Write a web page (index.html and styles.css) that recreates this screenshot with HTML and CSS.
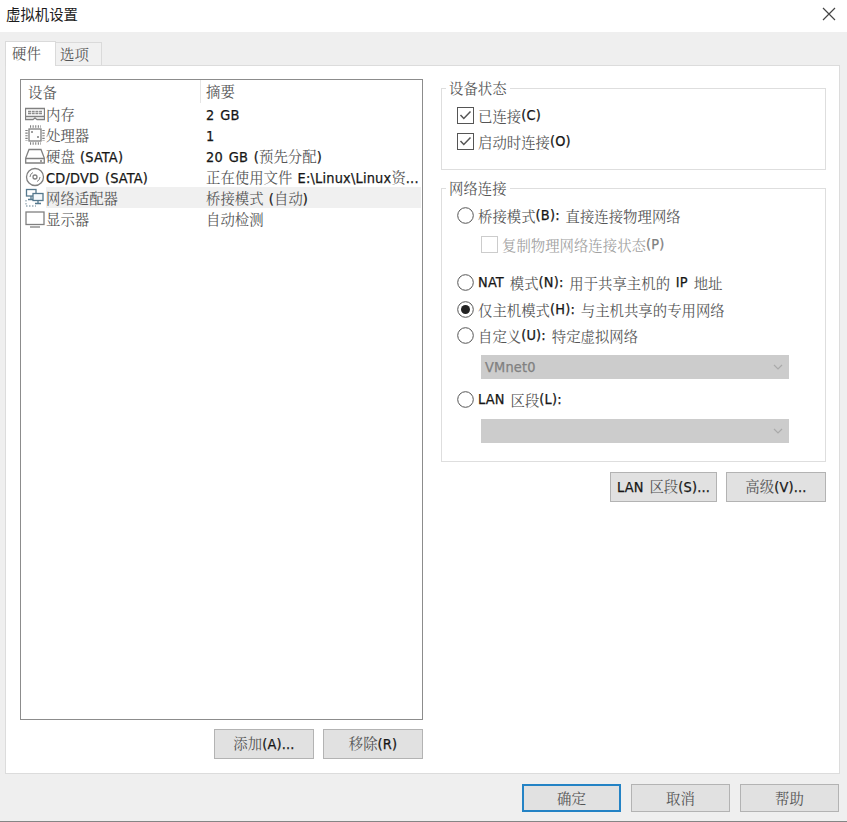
FILE: index.html
```html
<!DOCTYPE html>
<html lang="zh-CN">
<head>
<meta charset="utf-8">
<title>虚拟机设置</title>
<link rel="stylesheet" href="styles.css">
</head>
<body>
<div class="window">
  <header class="titlebar">
    <h1>虚拟机设置</h1>
    <svg class="close" width="14" height="14" viewBox="0 0 14 14"><path d="M1 1L13 13M13 1L1 13"/></svg>
  </header>
  <nav class="tabs">
    <div class="tab active">硬件</div>
    <div class="tab">选项</div>
  </nav>
  <main class="panel">
    <section class="hardware">
      <div class="list">
        <div class="row head"><span class="name">设备</span><span class="summary">摘要</span></div>
        <div class="row">
          <svg class="icon" viewBox="0 0 20 20"><path d="M.5 4.500H19.500V15.500H12L10 14L8 15.500H.5ZM1 12.500H19"/><path class="chips" d="M3 7.500H17M3 9.500H17" stroke-dasharray="3 .7"/></svg>
          <span class="name">内存</span><span class="summary"><b>2 GB</b></span>
        </div>
        <div class="row">
          <svg class="icon" viewBox="0 0 20 20"><rect x="4" y="4" width="12" height="12"/><path d="M5 1.500H16M5 18.500H16M1.500 5V16M18.500 5V16" stroke-width="2.400" stroke-dasharray="1.100 1.500"/><path d="M6 7H8M12 12H14"/></svg>
          <span class="name">处理器</span><span class="summary"><b>1</b></span>
        </div>
        <div class="row">
          <svg class="icon" viewBox="0 0 20 20"><path d="M4 3.500H16L19.300 12V17H.7V12ZM1 12.500H19M15 15H17"/></svg>
          <span class="name">硬盘 <b>(SATA)</b></span><span class="summary"><b>20 GB (</b>预先分配<b>)</b></span>
        </div>
        <div class="row">
          <svg class="icon" viewBox="0 0 20 20"><circle cx="10" cy="10" r="8.500"/><circle cx="10" cy="10" r="2"/><path d="M5 10A5 5 0 0 1 8 5.500M15 10A5 5 0 0 1 12 14.500" stroke-width="1"/></svg>
          <span class="name"><b>CD/DVD (SATA)</b></span><span class="summary">正在使用文件 <b>E:\Linux\Linux</b>资<b>...</b></span>
        </div>
        <div class="row selected">
          <svg class="icon network" viewBox="0 0 20 20"><rect x="1.500" y="1.500" width="9.500" height="6.500"/><path d="M6 8V11.500M3 11.500H8"/><rect x="8" y="5.500" width="10" height="7" fill="#f4f8fb"/><path d="M13 12.500V15.500M10 15.500H16"/><path class="wire" d="M1 12V18H11" stroke-dasharray="1.500 1.500"/></svg>
          <span class="name">网络适配器</span><span class="summary">桥接模式 <b>(</b>自动<b>)</b></span>
        </div>
        <div class="row">
          <svg class="icon" viewBox="0 0 20 20"><rect x="1" y="3" width="18" height="12.500"/><path d="M5 18H15"/></svg>
          <span class="name">显示器</span><span class="summary">自动检测</span>
        </div>
      </div>
      <div class="actions">
        <button>添加<b>(A)...</b></button>
        <button>移除<b>(R)</b></button>
      </div>
    </section>
    <section class="settings">
      <fieldset class="status">
        <legend>设备状态</legend>
        <label class="option"><svg class="mark" viewBox="0 0 17 17"><rect x=".5" y=".5" width="16" height="16"/><path d="M3.500 8L6.800 11.500L13.500 4.500"/></svg>已连接<b>(C)</b></label>
        <label class="option"><svg class="mark" viewBox="0 0 17 17"><rect x=".5" y=".5" width="16" height="16"/><path d="M3.500 8L6.800 11.500L13.500 4.500"/></svg>启动时连接<b>(O)</b></label>
      </fieldset>
      <fieldset class="connection">
        <legend>网络连接</legend>
        <label class="option"><svg class="mark" viewBox="0 0 17 17"><circle cx="8.500" cy="8.500" r="7.800"/></svg>桥接模式<b>(B): </b>直接连接物理网络</label>
        <label class="option replicate"><svg class="mark" viewBox="0 0 17 17"><rect x=".5" y=".5" width="16" height="16"/></svg>复制物理网络连接状态<b>(P)</b></label>
        <label class="option"><svg class="mark" viewBox="0 0 17 17"><circle cx="8.500" cy="8.500" r="7.800"/></svg><b>NAT </b>模式<b>(N): </b>用于共享主机的<b> IP </b>地址</label>
        <label class="option"><svg class="mark" viewBox="0 0 17 17"><circle cx="8.500" cy="8.500" r="7.800"/><circle class="dot" cx="8.500" cy="8.500" r="4.500"/></svg>仅主机模式<b>(H): </b>与主机共享的专用网络</label>
        <label class="option"><svg class="mark" viewBox="0 0 17 17"><circle cx="8.500" cy="8.500" r="7.800"/></svg>自定义<b>(U): </b>特定虚拟网络</label>
        <div class="select"><b>VMnet0</b><svg width="10" height="6" viewBox="0 0 10 6"><path d="M1 1L5 5L9 1"/></svg></div>
        <label class="option lan"><svg class="mark" viewBox="0 0 17 17"><circle cx="8.500" cy="8.500" r="7.800"/></svg><b>LAN </b>区段<b>(L):</b></label>
        <div class="select"><b></b><svg width="10" height="6" viewBox="0 0 10 6"><path d="M1 1L5 5L9 1"/></svg></div>
      </fieldset>
      <div class="actions">
        <button class="wide"><b>LAN </b>区段<b>(S)...</b></button>
        <button>高级<b>(V)...</b></button>
      </div>
    </section>
  </main>
  <footer class="footer">
    <button class="default">确定</button>
    <button>取消</button>
    <button>帮助</button>
  </footer>
</div>
</body>
</html>
```
FILE: styles.css
```css
* { box-sizing: border-box; }
body {
  margin: 0;
  font: 14.4px/21px "Noto Serif CJK SC", "Noto Sans CJK SC", sans-serif;
  word-spacing: 1.5px;
  color: #555;
}
/* Latin runs sit in a heavier tone than the CJK text */
b {
  font-family: "DejaVu Sans Condensed", "DejaVu Sans", sans-serif;
  font-stretch: condensed;
  font-weight: 400;
  letter-spacing: .2px;
  -webkit-text-stroke: .25px currentColor;
  color: #161616;
  white-space: pre;
}
.window {
  display: flex;
  flex-direction: column;
  height: 822px;
  background: #efefef;
  border-bottom: 1px solid #858585;
}
.titlebar {
  display: flex;
  align-items: center;
  justify-content: space-between;
  height: 32px;
  padding: 0 11px 4px 6px;
  background: #fff;
}
.titlebar h1 {
  margin: -1px 0 0;
  font-family: "Noto Sans CJK SC", sans-serif;
  font-size: 14.4px;
  font-weight: 400;
  color: #1c1c1c;
}
.close { fill: none; stroke: #444; stroke-width: 1.2; }
.tabs { display: flex; align-items: flex-end; height: 34px; margin-left: 5px; }
.tab {
  width: 46px;
  height: 23px;
  margin-bottom: 1px;
  padding-left: 4px;
  border: 1px solid #dadada;
  border-width: 1px 1px 0 0;
  background: #f1f1f1;
}
.tab.active {
  z-index: 1;
  width: 51px;
  height: 25px;
  margin-bottom: 0;
  padding: 0 0 0 6px;
  border-left-width: 1px;
  background: #fff;
}
.panel {
  display: flex;
  gap: 18px;
  width: 835px;
  height: 709px;
  margin: -1px 0 0 5px;
  padding: 13px 13px 0 14px;
  border: 1px solid #dcdcdc;
  background: #fff;
}
.hardware { width: 403px; }
.list { height: 641px; padding-right: 1px; border: 1px solid #8c8c8c; }
.row { display: flex; align-items: center; height: 21px; }
.row.head { height: 23px; padding-left: 7px; }
.head .name { width: 172px; }
.row.head .summary { height: 23px; border-left: 1px solid #e5e5e5; padding-left: 5px; }
.icon {
  width: 20px;
  height: 20px;
  margin: 0 1px 0 4px;
  fill: none;
  stroke: #808080;
  stroke-width: 1.3;
}
.chips { stroke: #8b8b8b; stroke-width: 1.5; }
.network { stroke: #55788d; }
.wire { stroke: #98aab5; }
.name { width: 154px; height: 21px; white-space: nowrap; }
.summary { flex: 1; height: 21px; padding-left: 6px; white-space: nowrap; }
.selected .name, .selected .summary { background: #f0f0f0; }
.actions { display: flex; justify-content: flex-end; gap: 9px; margin-top: 9px; }
button {
  width: 100px;
  height: 30px;
  padding: 0 0 1px;
  border: 1px solid #b3b3b3;
  background: #e1e1e1;
  color: #555;
  font: inherit;
  word-spacing: inherit;
}
button.wide { width: 107px; }
.settings { width: 385px; padding-top: 9px; }
fieldset {
  position: relative;
  min-width: 0;
  margin: 0;
  padding: 0 0 0 15px;
  border: 1px solid #dedede;
}
legend {
  position: absolute;
  top: -12px;
  left: 4px;
  padding: 0 3px;
  background: #fff;
}
.status { height: 82px; padding-top: 13px; }
.connection { height: 274px; margin-top: 18px; padding-top: 13px; }
.option { display: flex; align-items: center; height: 26.5px; white-space: nowrap; }
.mark {
  flex: none;
  width: 17px;
  height: 17px;
  margin-right: 4px;
  fill: #fff;
  stroke: #555;
  stroke-width: 1;
}
.mark path { fill: none; stroke-width: 1.5; }
.mark .dot { fill: #222; stroke: none; }
.replicate { margin: 3px 0 11.5px 24px; color: #a2a2a2; }
.replicate b { color: #808080; }
.replicate .mark { stroke: #ccc; }
.select {
  display: flex;
  align-items: center;
  justify-content: space-between;
  width: 308px;
  height: 24px;
  margin: 6px 0 0 24px;
  padding: 0 6px 0 4px;
  background: #ccc;
}
.select b { color: #808080; }
.select svg { fill: none; stroke: #aaa; stroke-width: 1.2; }
.lan { margin-top: 7px; }
.settings .actions { margin-top: 10px; }
.footer {
  display: flex;
  justify-content: flex-end;
  gap: 10px;
  padding: 10px 8px 0 0;
}
.footer button { width: 99px; height: 28px; }
.footer .default { border: 2px solid #2483c5; }
```
